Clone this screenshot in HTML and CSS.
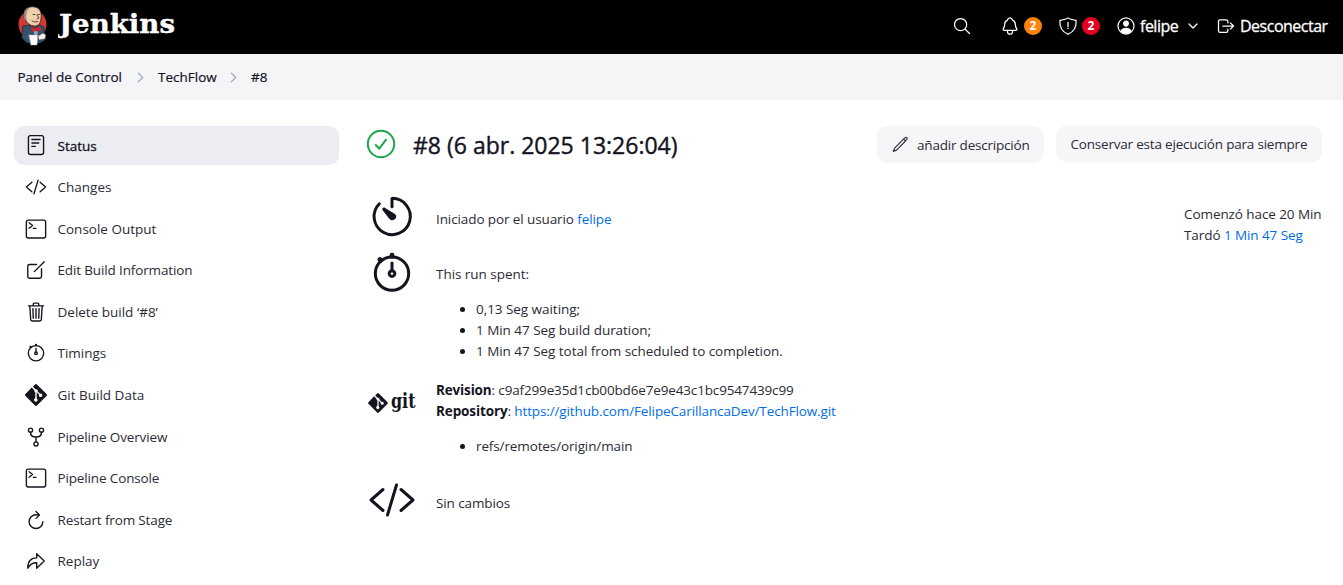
FILE: index.html
```html
<!DOCTYPE html>
<html lang="es">
<head>
<meta charset="utf-8">
<title>TechFlow #8 [Jenkins]</title>
<link rel="stylesheet" href="styles.css">
</head>
<body>
<svg class="defs" width="0" height="0">
  <symbol id="code" viewBox="0 0 512 512"><path d="M160 368L32 256l128-112M352 368l128-112-128-112M304 96l-96 320"/></symbol>
  <symbol id="terminal" viewBox="0 0 512 512"><rect x="32" y="48" width="448" height="416" rx="44"/><path d="M96 112l80 64-80 64M192 240h64"/></symbol>
  <symbol id="timer" viewBox="0 0 512 512"><circle cx="256" cy="262" r="178"/><path d="M256 150v84"/><circle cx="256" cy="262" r="30"/><path class="knob" d="M256 66v12M128 113l6 6"/></symbol>
  <symbol id="git" viewBox="0 0 92 92"><path class="solid" d="M90 42 50 2a6 6 0 0 0-8 0l-9 9 11 11a7 7 0 0 1 9 9l10 10a7 7 0 1 1-4 4L49 35v26a7 7 0 1 1-6-1V34a7 7 0 0 1-4-8L28 15 2 42a6 6 0 0 0 0 8l40 40a6 6 0 0 0 8 0l40-40a6 6 0 0 0 0-8z"/></symbol>
</svg>

<header class="header">
  <a class="brand">
    <svg class="butler" viewBox="0 0 30 40">
      <ellipse cx="14.500" cy="18.500" rx="14" ry="14.500" fill="#d33833"/>
      <path d="M5 20 12 19l4 3 6-3 4 2 1 13-5 3H9l-5-5z" fill="#35526a" stroke="#142633" stroke-width=".7"/>
      <path d="M6 8C7 2 12 0 17 1c5 1 7 6 6 11 0 5-3 8-6 8-5 0-8-3-10-7-1-2-2-3-1-5z" fill="#efcfac" stroke="#2b2422" stroke-width=".8"/>
      <path d="M6 12C5 4 8 2 12 1L9 5l-1 6 1 4c-2-1-3-2-3-3z" fill="#8b8887"/>
      <path d="M15 8.500h2M20 8.500h2M14 15c2 1.500 5 1 6 .5M19 9l2 3-2 1" fill="none" stroke="#49372d" stroke-width=".9"/>
      <path d="m13 21 4 1.500 5-2 1 5-5-1-4 2z" fill="#c9242b"/>
      <path d="m16 25 4 .5-1 4-3-1z" fill="#8eaabb"/>
      <path d="M11 29h9l-1 10h-6z" fill="#fff" stroke="#aaa" stroke-width=".5"/>
      <path d="m20 30 5-3 3 2-1 4-6 1z" fill="#f4eee9" stroke="#333" stroke-width=".5"/>
    </svg>
    <svg class="wordmark" viewBox="0 0 118 36"><text x="1" y="27" textLength="116" lengthAdjust="spacingAndGlyphs">Jenkins</text></svg>
  </a>
  <nav class="tools">
    <svg class="ico search" viewBox="0 0 512 512"><circle cx="220" cy="220" r="156"/><path d="m338 338 110 110"/></svg>
    <span class="alert"><svg class="ico" viewBox="0 0 512 512"><path d="M428 326c-21-26-36-40-36-112 0-67-34-91-62-103-4-1-8-5-9-9-6-20-22-54-65-54s-59 34-65 54c-1 4-5 8-9 9-28 12-62 36-62 103 0 72-15 86-36 112-13 16 0 42 23 42h298c23 0 36-26 23-42zM320 384v16a64 64 0 0 1-128 0v-16"/></svg><b class="badge orange">2</b></span>
    <span class="alert shield"><svg class="ico" viewBox="0 0 512 512"><path d="M463 112c-12-3-146-17-207-64-61 47-195 61-207 64-14 198 51 294 207 352 156-58 221-154 207-352zM256 160v112"/><circle class="solid" cx="256" cy="322" r="20"/></svg><b class="badge red">2</b></span>
    <span class="user"><svg class="ico" viewBox="0 0 512 512"><circle cx="256" cy="256" r="205"/><path class="solid" d="M256 112c-46 0-80 34-77 80 3 45 38 82 77 82s74-37 77-82c3-47-31-80-77-80zM112 384c25-51 81-81 144-81s119 30 144 81c-76 90-212 90-288 0z"/></svg><span class="name">felipe</span><svg class="chev" viewBox="0 0 10 6"><path d="m1 1 4 4 4-4"/></svg></span>
    <span class="logout"><svg class="ico" viewBox="0 0 512 512"><path d="M304 336v40a40 40 0 0 1-40 40H104a40 40 0 0 1-40-40V136a40 40 0 0 1 40-40h152c22 0 48 18 48 40v40M368 336l80-80-80-80M176 256h256"/></svg><span class="exit">Desconectar</span></span>
  </nav>
</header>

<nav class="crumbs">
  <a class="c1">Panel de Control</a><svg class="sep" viewBox="0 0 6 10"><path d="m1 1 4 4-4 4"/></svg>
  <a class="c2">TechFlow</a><svg class="sep" viewBox="0 0 6 10"><path d="m1 1 4 4-4 4"/></svg>
  <a>#8</a>
</nav>

<div class="page">
  <aside class="side">
    <a class="task active"><svg class="ico" viewBox="0 0 512 512"><rect x="80" y="38" width="352" height="440" rx="46"/><path d="M160 128h192M160 208h160M160 288h80"/></svg><span>Status</span></a>
    <a class="task"><svg class="ico"><use href="#code"/></svg><span>Changes</span></a>
    <a class="task"><svg class="ico"><use href="#terminal"/></svg><span>Console Output</span></a>
    <a class="task tight"><svg class="ico" viewBox="0 0 512 512"><path d="M384 224v184a40 40 0 0 1-40 40H104a40 40 0 0 1-40-40V168a40 40 0 0 1 40-40h167M218 294 448 64"/></svg><span>Edit Build Information</span></a>
    <a class="task"><svg class="ico" viewBox="0 0 512 512"><path d="m112 112 20 320c1 18 14 32 32 32h184c18 0 31-14 32-32l20-320M80 112h352M192 112V72c0-13 11-24 24-24h80c13 0 24 11 24 24v40M256 176v224M184 176l8 224M328 176l-8 224"/></svg><span>Delete build ‘#8’</span></a>
    <a class="task"><svg class="ico"><use href="#timer"/></svg><span>Timings</span></a>
    <a class="task"><svg class="ico"><use href="#git"/></svg><span>Git Build Data</span></a>
    <a class="task tight"><svg class="ico" viewBox="0 0 512 512"><circle cx="128" cy="96" r="48"/><circle cx="384" cy="96" r="48"/><circle cx="256" cy="416" r="48"/><path d="M256 256v112M128 144c0 74 32 112 128 112s128-38 128-112"/></svg><span>Pipeline Overview</span></a>
    <a class="task tight"><svg class="ico"><use href="#terminal"/></svg><span>Pipeline Console</span></a>
    <a class="task tight"><svg class="ico" viewBox="0 0 512 512"><path d="M320 146s24-12-64-12a160 160 0 1 0 160 160M256 58l80 80-80 80"/></svg><span>Restart from Stage</span></a>
    <a class="task"><svg class="ico" viewBox="0 0 512 512"><path d="M448 256 272 88v96C103 184 64 304 64 424c48-91 103-128 208-128v128z"/></svg><span>Replay</span></a>
  </aside>

  <main class="main">
    <div class="top">
      <svg class="ok" viewBox="0 0 30 30"><circle cx="15" cy="15" r="13.200"/><path d="m9.800 16 3.500 3.700 6.700-9"/></svg>
      <h1>#8 (6 abr. 2025 13:26:04)</h1>
      <button class="btn describe"><svg class="ico" viewBox="0 0 512 512"><path d="M358 120 102 376l-34 78c-3 8 2 14 10 10l78-34 256-256zM358 120l36-38c20-20 40-22 56-6s12 36-6 54l-36 40z"/></svg><span>añadir descripción</span></button>
      <button class="btn keep"><span>Conservar esta ejecución para siempre</span></button>
    </div>
    <div class="content">
      <div class="details">
        <section class="row cause"><svg class="big" viewBox="0 0 512 512"><path d="M121 125a193 193 0 1 0 135-57v90"/><path class="solid" d="M229 287 154 191c-8-14 11-32 25-24l108 67c42 32-18 94-58 53z"/></svg><div class="info">Iniciado por el usuario <a>felipe</a></div></section>
        <section class="row spent"><svg class="big"><use href="#timer"/></svg><div class="info">This run spent:
          <ul><li>0,13 Seg waiting;</li><li>1 Min 47 Seg build duration;</li><li>1 Min 47 Seg total from scheduled to completion.</li></ul></div></section>
        <section class="row scm"><svg class="big" viewBox="0 0 48 48"><svg x="0" y="15" width="20" height="20"><use href="#git"/></svg><text x="23" y="30" textLength="24.500" lengthAdjust="spacingAndGlyphs">git</text></svg><div class="info"><div class="rev"><b>Revision</b>: c9af299e35d1cb00bd6e7e9e43c1bc9547439c99</div><div class="repo"><b>Repository</b>: <a>https://github.com/FelipeCarillancaDev/TechFlow.git</a></div>
          <ul><li>refs/remotes/origin/main</li></ul></div></section>
        <section class="row nochange"><svg class="big"><use href="#code"/></svg><div class="info">Sin cambios</div></section>
      </div>
      <div class="when"><div>Comenzó hace 20 Min</div><div>Tardó <a>1 Min 47 Seg</a></div></div>
    </div>
  </main>
</div>
</body>
</html>
```

FILE: styles.css
```css
* { box-sizing: border-box; }
body { margin: 0; height: 585px; overflow: hidden; background: #fff; color: #14141f; font: 13.5px/21px "Open Sans", "Noto Sans", sans-serif; }
.defs { position: absolute; }
svg { fill: none; stroke: currentColor; stroke-width: 32; stroke-linecap: round; stroke-linejoin: round; flex: none; display: block; }
.solid { fill: currentColor; stroke: none; }
.knob { stroke-width: 52; }

.header { display: flex; justify-content: space-between; height: 54px; background: #000; color: #fff; padding: 0 16px 0 18px; }
.brand { display: flex; }
.butler { width: 30px; height: 40px; margin-top: 6px; stroke: none; }
.wordmark { width: 118px; height: 36px; margin: 6px 0 0 10px; }
.wordmark text { fill: #fff; stroke: #fff; stroke-width: .4; font: bold 26px "DejaVu Serif", serif; }
.tools { display: flex; align-items: center; height: 52px; font-size: 16px; }
.tools .ico { width: 20px; height: 20px; }
.alert { display: flex; align-items: center; gap: 4px; margin-left: 28px; }
.alert.shield { margin-left: 16px; }
.badge { width: 18px; height: 18px; border-radius: 50%; font-size: 12px; line-height: 18px; text-align: center; }
.orange { background: #ff820a; }
.red { background: #e6001f; }
.user { display: flex; align-items: center; margin-left: 16px; }
.name { margin-left: 4px; width: 39px; letter-spacing: -.5px; -webkit-text-stroke: .3px; }
.chev { width: 10px; height: 6px; margin-left: 9px; stroke-width: 1.3; }
.logout { display: flex; align-items: center; margin-left: 18px; }
.exit { margin-left: 4px; width: 87px; letter-spacing: -.5px; -webkit-text-stroke: .3px; }

.crumbs { display: flex; align-items: center; height: 46px; padding-left: 17.500px; background: #f5f5f8; -webkit-text-stroke: .2px; }
.c1 { width: 105.500px; }
.c2 { width: 58px; }
.sep { width: 7px; height: 11px; margin: 0 14px; stroke: #96aac8; stroke-width: 1.2; }

.page { display: flex; padding: 26px 21px 0 14px; }
.side { width: 325px; flex: none; display: flex; flex-direction: column; gap: 2.600px; }
.task { display: flex; align-items: center; height: 39px; padding-left: 11px; border-radius: 10px; flex: none; }
.task .ico { width: 22px; height: 22px; margin-right: 10.500px; }
.task span { padding-top: 1px; color: #2b2b36; }
.tight { letter-spacing: -.14px; }
.task.active { background: #ecedf3; }
.task.active span { color: #14141f; -webkit-text-stroke: .3px; }
.task.active .ico { margin-top: -2px; }

.main { flex: 1; margin-left: 27px; }
.top { display: flex; align-items: flex-start; height: 37px; }
.ok { width: 30px; height: 30px; margin-top: 3px; color: #1ea64b; stroke-width: 2; }
h1 { margin: 1px auto 0 17px; font-size: 23px; line-height: 37px; font-weight: 400; -webkit-text-stroke: .4px; white-space: nowrap; }
.btn { display: flex; align-items: center; height: 36px; border: 0; border-radius: 10px; background: #f6f6f9; color: #2b2b36; font: inherit; white-space: nowrap; margin-left: 12px; padding: 1px 14px 0; letter-spacing: -.2px; }
.btn.describe { width: 167px; height: 37px; }
.btn.keep { width: 266px; padding-left: 14.500px; }
.btn .ico { width: 18px; height: 18px; margin: -2px 8px 0 0; }

.content { display: flex; justify-content: space-between; padding-top: 29px; }
.row { display: flex; padding-left: 2px; }
.big { width: 48px; height: 48px; margin-right: 20px; }
.big text { fill: currentColor; stroke: none; font: bold 20px "DejaVu Serif", serif; }
.info, .when { white-space: nowrap; color: #2b2b36; }
.info b, li::marker { color: #14141f; }
.info a, .when a { color: #006ee6; }
.cause .info { padding-top: 16.500px; letter-spacing: -.1px; }
.spent { margin-top: 9px; }
.spent .info { padding-top: 14.500px; letter-spacing: -.04px; }
.scm { margin-top: 16.500px; }
.scm .info { padding-top: 1.500px; letter-spacing: -.12px; }
.rev { letter-spacing: -.15px; }
.nochange { margin-top: 19.500px; }
.nochange .info { padding-top: 16.500px; letter-spacing: -.1px; }
ul { margin: 14px 0 0; padding-left: 40px; }
.when { width: 138px; margin-top: 12px; letter-spacing: -.08px; }
```
